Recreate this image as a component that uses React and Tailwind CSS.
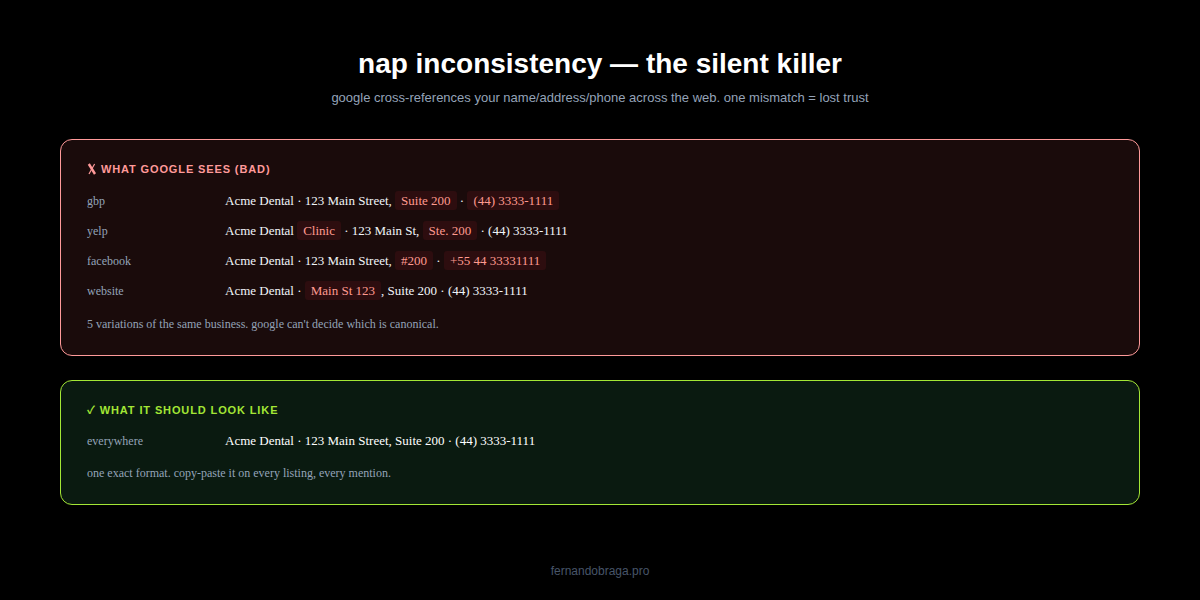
import React from 'react'

const sans = "font-['Liberation_Sans',sans-serif]"

const Bad = ({ children }) => (
    <span className="inline-block rounded-[3px] bg-[#2d0d0f] px-[6px] py-[2px] leading-[15px] text-[#ff9a8f]">{children}</span>
)

const Row = ({ label, children }) => (
    <div className="flex h-[30px] items-center">
        <div className="w-[138px] shrink-0 text-[12px] text-[#94a3b8]">{label}</div>
        <div className="whitespace-pre text-[13px] text-[#f1f5f9]">{children}</div>
    </div>
)

const App = () => {
    return (
        <div className="flex h-[600px] w-[1200px] flex-col overflow-hidden bg-black px-[60px] font-['Liberation_Serif',serif]">
            {/* Title */}
            <div className="pt-[47px] text-center">
                <h1 className={`${sans} text-[28px] leading-[34px] font-bold text-white`}>nap inconsistency — the silent killer</h1>
                <p className={`${sans} mt-[9px] text-[13px] leading-[16px] text-[#94a3b8]`}>google cross-references your name/address/phone across the web. one mismatch = lost trust</p>
            </div>

            {/* Bad card */}
            <div className="mt-[33px] h-[217px] rounded-[12px] border border-[#ff9a9a] bg-[#1a0b0b] px-[26px] pt-[21px]">
                <div className={`${sans} mb-[9px] text-[11px] leading-[16px] font-bold tracking-[0.88px] text-[#ff9a9a]`}>
                    <svg viewBox="0 0 10 12" className="inline h-[12px] w-[10px] align-[-2px]" fill="none" stroke="currentColor" aria-label="✗">
                        <path d="M1.8 1 L8 11" strokeWidth="2.4" />
                        <path d="M7.6 1 L2 11" strokeWidth="1.2" />
                    </svg>
                    {' '}WHAT GOOGLE SEES (BAD)
                </div>
                <Row label="gbp">Acme Dental · 123 Main Street, <Bad>Suite 200</Bad> · <Bad>(44) 3333-1111</Bad></Row>
                <Row label="yelp">Acme Dental <Bad>Clinic</Bad> · 123 Main St, <Bad>Ste. 200</Bad> · (44) 3333-1111</Row>
                <Row label="facebook">Acme Dental · 123 Main Street, <Bad>#200</Bad> · <Bad>+55 44 33331111</Bad></Row>
                <Row label="website">Acme Dental · <Bad>Main St 123</Bad>, Suite 200 · (44) 3333-1111</Row>
                <p className="mt-[10px] text-[12px] leading-[16px] text-[#94a3b8]">5 variations of the same business. google can't decide which is canonical.</p>
            </div>

            {/* Good card */}
            <div className="mt-[24px] h-[125px] rounded-[12px] border border-[#a3e635] bg-[#0a1a10] px-[26px] pt-[20px]">
                <div className={`${sans} mb-[8px] text-[11px] leading-[16px] font-bold tracking-[0.88px] text-[#a3e635]`}><span className="font-['Noto_Sans_CJK_SC',sans-serif]">✓</span> WHAT IT SHOULD LOOK LIKE</div>
                <Row label="everywhere"><span className="text-white">Acme Dental · 123 Main Street, Suite 200 · (44) 3333-1111</span></Row>
                <p className="mt-[9px] text-[12px] leading-[16px] text-[#94a3b8]">one exact format. copy-paste it on every listing, every mention.</p>
            </div>

            <div className={`${sans} mt-[58px] text-center text-[12px] leading-[16px] text-[#475569]`}>fernandobraga.pro</div>
        </div>
    )
}

export default App
